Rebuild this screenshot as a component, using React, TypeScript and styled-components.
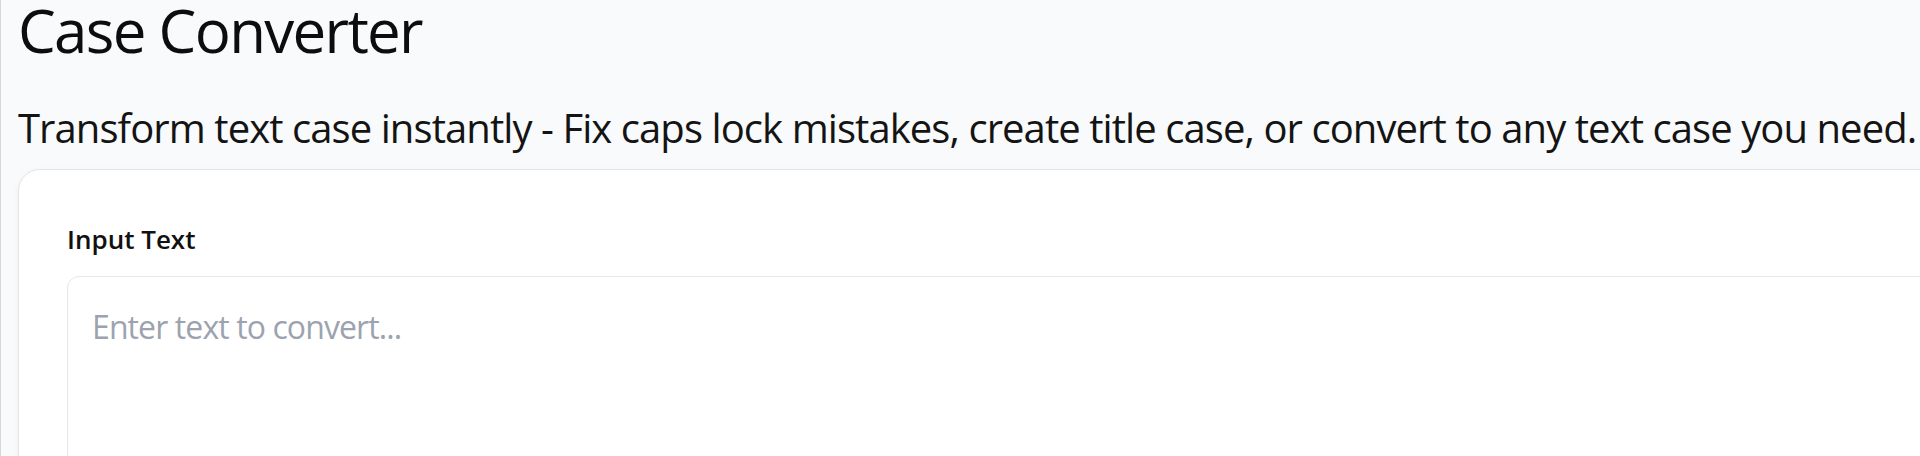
import React from "react";
import styled, { createGlobalStyle } from "styled-components";

const GlobalStyle = createGlobalStyle`
  html, body {
    margin: 0;
    padding: 0;
    background: #f9fafb;
    overflow: hidden;
  }
  body {
    font-family: "Open Sans", "Noto Sans", sans-serif;
    color: #111111;
  }
`;

const Page = styled.div`
  min-height: 456px;
  width: 2600px;
  box-sizing: border-box;
  padding: 0 0 0 17px;
  border-left: 1px solid #d6d8dc;
  background: #f9fafb;
`;

const Title = styled.h1`
  margin: 0;
  font-size: 60px;
  line-height: 60px;
  font-weight: 400;
  letter-spacing: -0.028em;
  color: #0d0d0d;
`;

const Subtitle = styled.p`
  margin: 48px 0 0;
  font-size: 40px;
  line-height: 40px;
  font-weight: 400;
  letter-spacing: -0.023em;
  color: #141414;
  white-space: nowrap;
`;

const Card = styled.section`
  margin-top: 21px;
  background: #ffffff;
  border: 1px solid #e3e5e8;
  border-radius: 22px;
  box-shadow: 0 2px 6px rgba(0, 0, 0, 0.05);
  padding: 50px 48px 48px;
  display: flex;
  flex-direction: column;
  gap: 17px;
`;

const Label = styled.label`
  font-size: 26px;
  line-height: 39px;
  font-weight: 600;
  color: #111111;
`;

const TextArea = styled.textarea`
  box-sizing: border-box;
  width: 100%;
  height: 320px;
  padding: 26px 24px 24px;
  border: 1px solid #e5e7eb;
  border-radius: 12px;
  background: #ffffff;
  font-family: inherit;
  font-size: 32px;
  line-height: 48px;
  letter-spacing: -0.028em;
  color: #111111;
  resize: none;
  outline: none;
  &::placeholder {
    color: #9ca3af;
  }
`;

export default function App() {
  return (
    <>
      <GlobalStyle />
      <Page>
        <Title>Case Converter</Title>
        <Subtitle>
          Transform text case instantly - Fix caps lock mistakes, create title case, or convert to any text case you need.
        </Subtitle>
        <Card>
          <Label htmlFor="input-text">Input Text</Label>
          <TextArea id="input-text" placeholder="Enter text to convert..." />
        </Card>
      </Page>
    </>
  );
}
